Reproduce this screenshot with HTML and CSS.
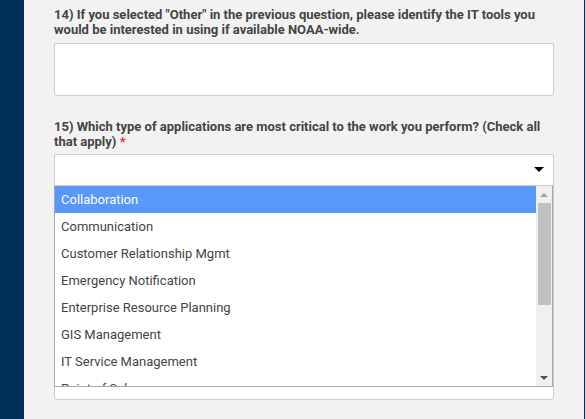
FILE: index.html
```html
<!DOCTYPE html>
<html lang="en">
<head>
<meta charset="utf-8">
<title>Survey</title>
<link rel="stylesheet" href="styles.css">
</head>
<body>
<div class="page">
  <div class="sidebar"></div>
  <main class="main">
    <div class="question q14">
      <label class="qlabel">14) If you selected "Other" in the previous question, please identify the IT tools you would be interested in using if available NOAA-wide.</label>
      <div class="textarea"></div>
    </div>
    <div class="question q15">
      <label class="qlabel">15) Which type of applications are most critical to the work you perform? (Check all that apply) <span class="req">*</span></label>
      <div class="select">
        <div class="selection">
          <span class="caret"></span>
        </div>
        <div class="dropdown">
          <ul class="options">
            <li class="opt active">Collaboration</li>
            <li class="opt">Communication</li>
            <li class="opt">Customer Relationship Mgmt</li>
            <li class="opt">Emergency Notification</li>
            <li class="opt">Enterprise Resource Planning</li>
            <li class="opt">GIS Management</li>
            <li class="opt">IT Service Management</li>
            <li class="opt">Point of Sale</li>
          </ul>
          <div class="scrollbar">
            <div class="sb-btn"><span class="sb-up"></span></div>
            <div class="sb-track"><div class="sb-thumb"></div></div>
            <div class="sb-btn"><span class="sb-down"></span></div>
          </div>
        </div>
      </div>
    </div>
  </main>
  <div class="edge"></div>
</div>
</body>
</html>
```
FILE: styles.css
```css
html, body {
  margin: 0;
  padding: 0;
  height: 100%;
}
body {
  font-family: Roboto, "Liberation Sans", Arial, sans-serif;
  color: #444;
  overflow: hidden;
}
.page {
  display: flex;
  height: 419px;
}
.sidebar {
  width: 24px;
  flex: none;
  background: #003057;
}
.edge {
  width: 1px;
  flex: none;
  background: #003057;
}
.main {
  flex: 1;
  background: #f2f2f2;
  padding: 7px 0 0 30px;
}
.question {
  width: 500px;
}
.qlabel {
  display: block;
  font-size: 13px;
  font-weight: bold;
  line-height: 15px;
  color: #444;
}
.req {
  color: #e8322a;
}
.textarea {
  margin-top: 6px;
  height: 51px;
  background: #fff;
  border: 1px solid #ccc;
  border-radius: 2px;
}
.q15 {
  margin-top: 23px;
}
.select {
  position: relative;
  margin-top: 5px;
  height: 244px;
  background: #fff;
  border: 1px solid #ccc;
  border-radius: 2px;
}
.selection {
  height: 30px;
  position: relative;
}
.caret {
  position: absolute;
  right: 9px;
  top: 12px;
  width: 0;
  height: 0;
  border-left: 5px solid transparent;
  border-right: 5px solid transparent;
  border-top: 5px solid #000;
}
.dropdown {
  position: absolute;
  left: -1px;
  top: 30px;
  width: 497px;
  height: 200px;
  display: flex;
  background: #fff;
  border-top: 1px solid #ccc;
  border-left: 1px solid #aaa;
  border-right: 1px solid #aaa;
  border-bottom: 1px solid #aaa;
}
.options {
  flex: 1;
  list-style: none;
  margin: 0;
  padding: 0;
  overflow: hidden;
}
.opt {
  height: 27px;
  line-height: 27px;
  padding-left: 6px;
  font-size: 13px;
  color: #444;
  white-space: nowrap;
}
.opt.active {
  background: #5897fb;
  color: #fff;
}
.scrollbar {
  width: 16px;
  flex: none;
  background: #f0f0f0;
  display: flex;
  flex-direction: column;
}
.sb-btn {
  height: 17px;
  flex: none;
  display: flex;
  align-items: center;
  justify-content: center;
}
.sb-up {
  width: 0;
  height: 0;
  border-left: 4px solid transparent;
  border-right: 4px solid transparent;
  border-bottom: 4px solid #a3a3a3;
}
.sb-down {
  width: 0;
  height: 0;
  border-left: 4px solid transparent;
  border-right: 4px solid transparent;
  border-top: 4px solid #505050;
}
.sb-track {
  flex: 1;
  padding: 0 1px 0 2px;
}
.sb-thumb {
  height: 102px;
  background: #c1c1c1;
}
```
